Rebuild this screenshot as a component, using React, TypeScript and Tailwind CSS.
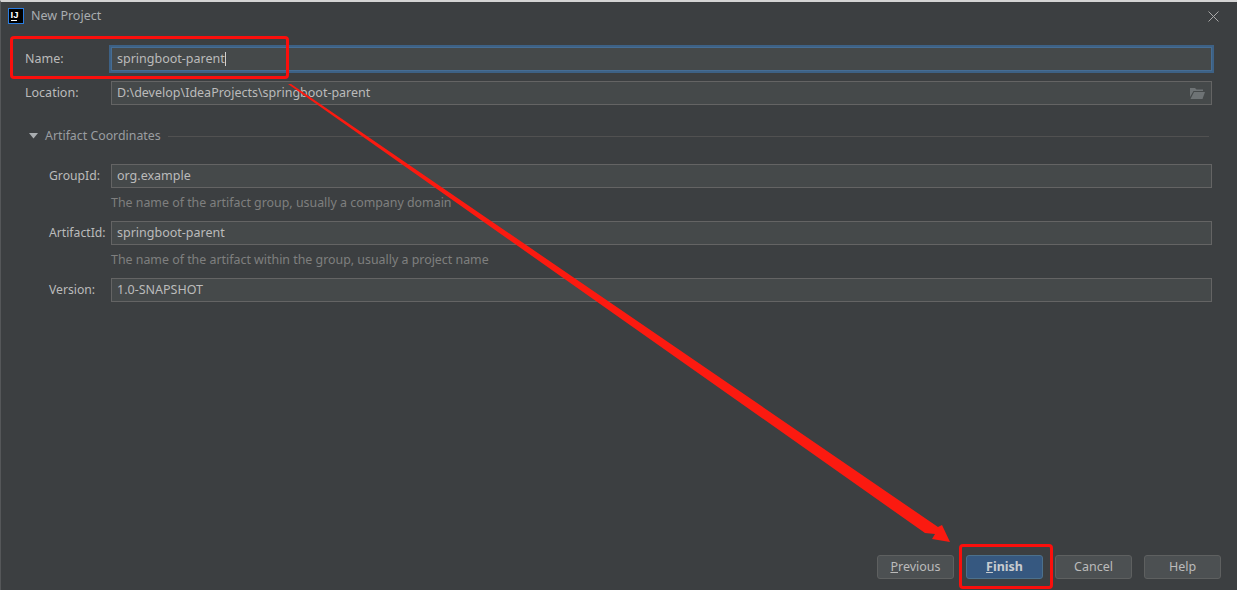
const labelCls = 'text-[#bbbbbb]';

function Field({ label, value, hint }: { label: string; value: string; hint?: string }) {
  return (
    <div className="flex flex-col">
      <div className="flex items-center h-6">
        <span className={`${labelCls} w-[62px] shrink-0 whitespace-nowrap text-[12.2px]`}>{label}</span>
        <div className="flex-1 h-6 bg-[#45494a] border border-[#646464] px-[5px] flex items-center text-[#bbbbbb]">{value}</div>
      </div>
      {hint && <div className="ml-[62px] mt-[3px] h-[30px] leading-[24px] text-[12.4px] text-[#7f7f7f]">{hint}</div>}
    </div>
  );
}

function Button({ children, primary }: { children: React.ReactNode; primary?: boolean }) {
  return (
    <button
      className={`w-[77px] h-6 rounded-[3px] border flex items-center justify-center ${
        primary
          ? 'bg-[#365880] border-[#4c708c] text-[#c8ccd0] font-bold'
          : 'bg-[#4c5052] border-[#5e6060] text-[#bbbbbb]'
      }`}
    >
      {children}
    </button>
  );
}

export default function App() {
  return (
    <div className="relative w-[1237px] h-[590px] overflow-hidden bg-[#3c3f41] border-t-[2px] border-t-[#d4d4d4] border-l border-l-[#555759] font-['Noto_Sans','Open_Sans',sans-serif] text-[12.5px]">
      {/* title bar */}
      <div className="h-[28px] flex items-center pl-[7px] pr-[18px]">
        <svg width="16" height="16" viewBox="0 0 16 16" className="shrink-0">
          <rect x="0.5" y="0.5" width="15" height="15" fill="#000" stroke="#2a7de1" />
          <text x="2.5" y="10" fontSize="9.5" fontWeight="700" fill="#fff" fontFamily="Liberation Sans, sans-serif">IJ</text>
          <rect x="3" y="12" width="6" height="1" fill="#fff" />
        </svg>
        <span className="ml-[7px] text-[#a9adb0]">New Project</span>
        <svg width="11" height="11" viewBox="0 0 11 11" className="ml-auto" fill="none" stroke="#a9a9a9" strokeWidth="1">
          <path d="M0.5 0.5l10 10M10.5 0.5l-10 10" />
        </svg>
      </div>

      {/* form */}
      <div className="pl-[24px] pr-[25px] pt-[17px]">
        <div className="flex items-center h-6">
          <span className={`${labelCls} w-[86px] shrink-0`}>Name:</span>
          <div className="flex-1 h-6 bg-[#45494a] border border-[#466d94] outline-2 outline-[#3d6185] px-[5px] flex items-center text-[#bbbbbb]">
            springboot-parent
            <span className="w-px h-[14px] bg-[#d0d0d0]" />
          </div>
        </div>
        <div className="flex items-center h-6 mt-[10px]">
          <span className={`${labelCls} w-[86px] shrink-0`}>Location:</span>
          <div className="flex-1 h-6 bg-[#45494a] border border-[#646464] pl-[5px] pr-[6px] flex items-center justify-between text-[#bbbbbb]">
            <span>D:\develop\IdeaProjects\springboot-parent</span>
            <svg width="15" height="12" viewBox="0 0 15 12">
              <path d="M0 1h5l1.5 1.5H13V4H3.5L0 10z" fill="#6e7375" />
              <path d="M4 5h11l-2.5 7H0.5z" fill="#6e7375" />
            </svg>
          </div>
        </div>

        <div className="flex items-center h-5 mt-[21px] pl-[4px]">
          <svg width="10" height="6" viewBox="0 0 10 6" className="shrink-0">
            <path d="M0 0h9L4.5 5.5z" fill="#a9adb0" />
          </svg>
          <span className="ml-[6px] text-[12.35px] text-[#9a9da0] whitespace-nowrap">Artifact Coordinates</span>
          <div className="flex-1 h-px bg-[#515151] ml-[7px] mr-[3px]" />
        </div>

        <div className="pl-[24px] mt-[18px] flex flex-col">
          <Field label="GroupId:" value="org.example" hint="The name of the artifact group, usually a company domain" />
          <Field label="ArtifactId:" value="springboot-parent" hint="The name of the artifact within the group, usually a project name" />
          <Field label="Version:" value="1.0-SNAPSHOT" />
        </div>
      </div>

      {/* footer buttons */}
      <div className="absolute right-[16px] bottom-[11px] flex gap-[12px]">
        <Button><span><span className="underline">P</span>revious</span></Button>
        <Button primary><span><span className="underline">F</span>inish</span></Button>
        <Button>Cancel</Button>
        <Button>Help</Button>
      </div>

      {/* annotations */}
      <div className="absolute left-[9px] top-[34px] w-[279px] h-[43px] border-[3px] border-[#fb0f0c] rounded-[4px]" />
      <div className="absolute left-[958px] top-[542px] w-[94px] h-[45px] border-[3px] border-[#fb0f0c] rounded-[4px]" />
      <svg width="1237" height="590" className="absolute -left-px -top-[2px] pointer-events-none">
        <polygon
          points="288,84 291,84 938,527 942,525 950,542 932,539 935,534 925,533"
          fill="#fb1a10"
        />
      </svg>
    </div>
  );
}
